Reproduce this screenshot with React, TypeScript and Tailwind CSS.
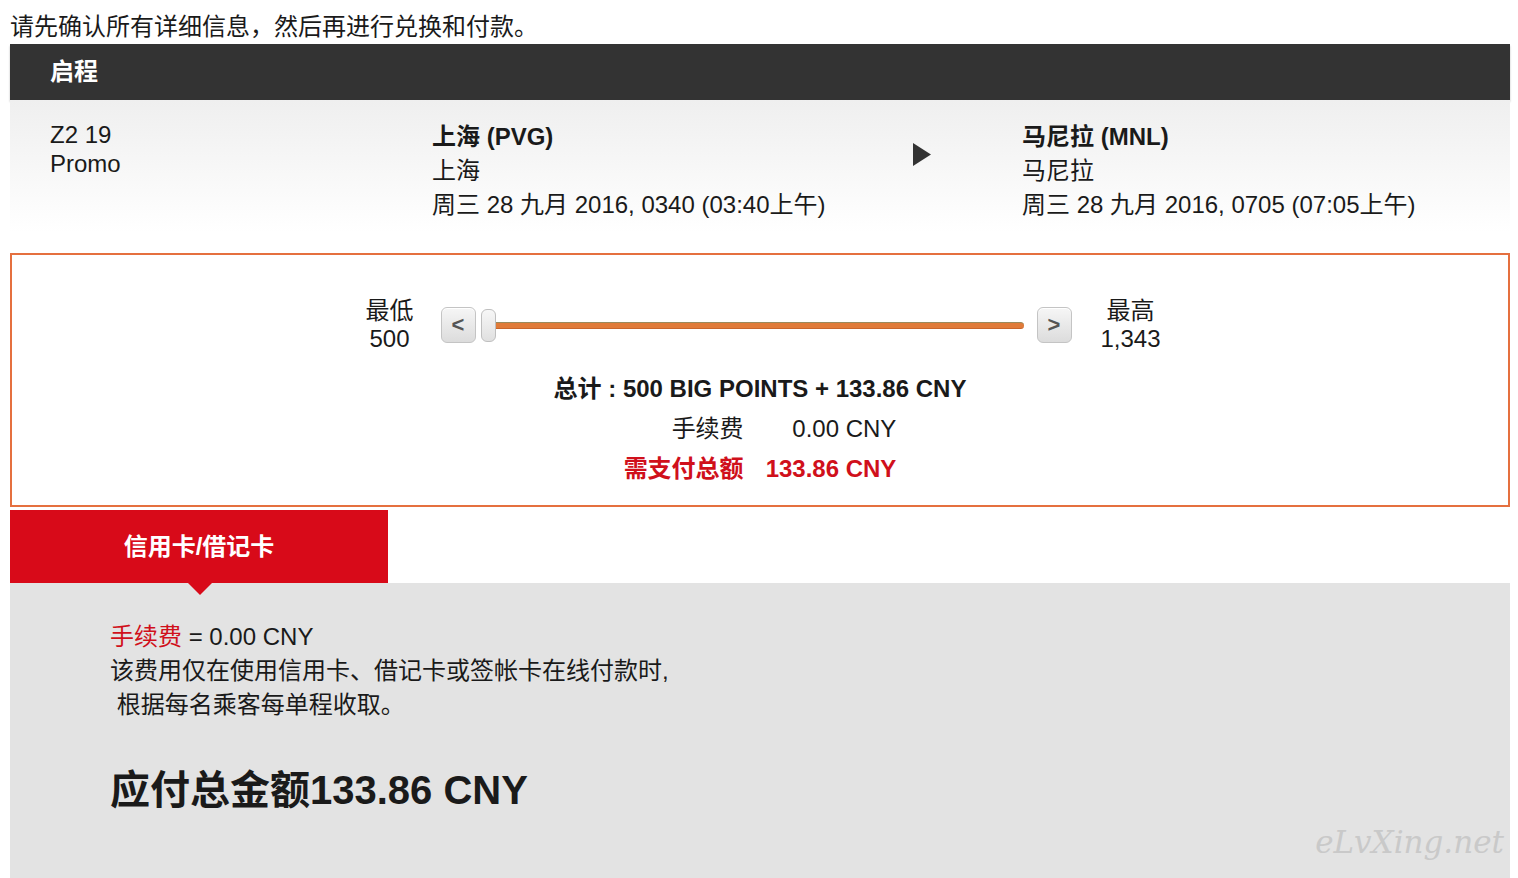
import React from "react";

const font = { fontFamily: '"Liberation Sans", "Noto Sans CJK SC", sans-serif' };

function SlideBtn({ children }: { children: React.ReactNode }) {
  return (
    <div className="w-[35px] h-[36px] rounded-[6px] border border-[#c4c4c4] bg-gradient-to-b from-[#f6f6f6] to-[#dcdcdc] flex items-center justify-center text-[#555] font-bold text-[22px] leading-none shadow-[inset_0_1px_0_#fff]">
      {children}
    </div>
  );
}

export default function App() {
  return (
    <div style={font} className="w-[1518px] h-[878px] overflow-hidden bg-white text-[#1a1a1a] text-[24px]">
      <div className="ml-[10px] w-[1500px]">
        <div className="pt-[10px] leading-[34px]">请先确认所有详细信息，然后再进行兑换和付款。</div>

        <div className="h-[56px] bg-[#333333] flex items-center pl-[40px] text-white font-bold shadow-[0_2px_2px_rgba(0,0,0,0.25)]">
          启程
        </div>

        <div className="flex pl-[40px] pt-[20px] pb-[10px] bg-gradient-to-b from-[#efefef] to-white">
          <div className="w-[382px] leading-[29px]">
            <div>Z2 19</div>
            <div>Promo</div>
          </div>
          <div className="w-[481px] leading-[34px]">
            <div className="font-bold">上海 (PVG)</div>
            <div>上海</div>
            <div>周三 28 九月 2016, 0340 (03:40上午)</div>
          </div>
          <div className="w-[109px] pt-[23px]">
            <svg width="18" height="23" viewBox="0 0 18 23">
              <polygon points="0,0 18,11.5 0,23" fill="#333" />
            </svg>
          </div>
          <div className="leading-[34px]">
            <div className="font-bold">马尼拉 (MNL)</div>
            <div>马尼拉</div>
            <div>周三 28 九月 2016, 0705 (07:05上午)</div>
          </div>
        </div>

        <div className="mt-[21px] h-[254px] border-2 border-[#e5703f] pt-[42px] flex flex-col items-center">
          <div className="flex items-center">
            <div className="w-[60px] text-center leading-[28px]">
              <div>最低</div>
              <div>500</div>
            </div>
            <div className="ml-[21px]">
              <SlideBtn>&lt;</SlideBtn>
            </div>
            <div className="ml-[5px] w-[15px] h-[33px] rounded-[6px] border border-[#bfbfbf] bg-gradient-to-b from-[#f7f7f7] to-[#e0e0e0]" />
            <div className="w-[528px] h-[7px] rounded-r-full bg-[#e07b39] border-t border-[#9a8a5c] border-b border-b-[#c8662c]" />
            <div className="ml-[13px]">
              <SlideBtn>&gt;</SlideBtn>
            </div>
            <div className="ml-[29px] w-[60px] text-center leading-[28px]">
              <div>最高</div>
              <div>1,343</div>
            </div>
          </div>

          <div className="mt-[16px] leading-[40px] font-bold">总计 : 500 BIG POINTS + 133.86 CNY</div>
          <div className="grid grid-cols-[auto_auto] gap-x-[22px] leading-[40px] text-right">
            <div>手续费</div>
            <div>0.00 CNY</div>
            <div className="font-bold text-[#d0101b]">需支付总额</div>
            <div className="font-bold text-[#d0101b]">133.86 CNY</div>
          </div>
        </div>

        <div className="mt-[3px] relative w-[378px] h-[73px] bg-[#d80a19] text-white font-bold flex items-center justify-center z-10">
          信用卡/借记卡
          <div className="absolute left-[178px] top-[73px] w-0 h-0 border-l-[12px] border-r-[12px] border-t-[12px] border-l-transparent border-r-transparent border-t-[#d80a19]" />
        </div>

        <div className="relative bg-[#e3e3e3] h-[320px] pl-[100px] pt-[37px]">
          <div className="leading-[34px]">
            <div>
              <span className="text-[#d0101b]">手续费</span> = 0.00 CNY
            </div>
            <div>该费用仅在使用信用卡、借记卡或签帐卡在线付款时,</div>
            <div>&nbsp;根据每名乘客每单程收取。</div>
          </div>
          <div className="mt-[44px] text-[40px] leading-[48px] font-bold">应付总金额133.86 CNY</div>
          <div
            className="absolute right-[6px] top-[242px] text-[31px] leading-[34px] italic text-[#c9c9c9]"
            style={{ fontFamily: '"DejaVu Serif", serif' }}
          >
            eLvXing.net
          </div>
        </div>
      </div>
    </div>
  );
}
